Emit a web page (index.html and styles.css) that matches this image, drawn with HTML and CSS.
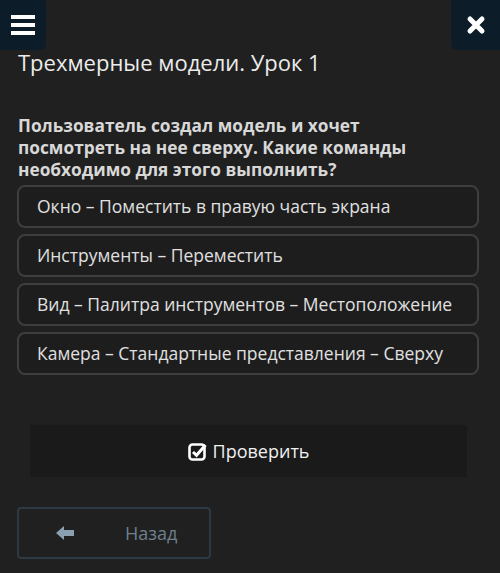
FILE: index.html
```html
<!DOCTYPE html>
<html>
<head>
    <title>Трехмерные модели</title>
    <link rel="stylesheet" href="styles.css">
</head>
<body>
    <div class="topbar">
        <div class="icon-btn">
            <svg width="24" height="22" viewBox="0 0 24 22"><rect x="0" y="1" width="24" height="4" fill="#fff"/><rect x="0" y="9" width="24" height="4" fill="#fff"/><rect x="0" y="17" width="24" height="4" fill="#fff"/></svg>
        </div>
        <div class="icon-btn close">
            <svg width="20" height="20" viewBox="0 0 20 20"><path d="M4 4 L16 16 M16 4 L4 16" stroke="#fff" stroke-width="5" stroke-linecap="round"/></svg>
        </div>
    </div>
    <div class="content">
        <h1 class="title">Трехмерные модели. Урок 1</h1>
        <p class="question">Пользователь создал модель и хочет посмотреть на нее сверху. Какие команды необходимо для этого выполнить?</p>
        <div class="options">
            <div class="option">Окно – Поместить в правую часть экрана</div>
            <div class="option">Инструменты – Переместить</div>
            <div class="option">Вид – Палитра инструментов – Местоположение</div>
            <div class="option">Камера – Стандартные представления – Сверху</div>
        </div>
        <div class="check">
            <svg width="19" height="19" viewBox="0 0 19 19"><rect x="1.5" y="2.5" width="15" height="15" rx="3" fill="none" stroke="#fff" stroke-width="2.6"/><path d="M5 10 L8.5 13.3 L17.5 3" fill="none" stroke="#fff" stroke-width="3"/></svg>
            <span>Проверить</span>
        </div>
        <div class="back">
            <svg width="20" height="16" viewBox="0 0 20 16"><path d="M1 8 L9 1 L9 5 L19 5 L19 11 L9 11 L9 15 Z" fill="#8aa0b0"/></svg>
            <span>Назад</span>
        </div>
    </div>
</body>
</html>
```

FILE: styles.css
```css
body {
    margin: 0;
    background-color: #202020;
    font-family: "Open Sans", sans-serif;
    color: #e6e6e6;
    width: 500px;
    height: 573px;
    overflow: hidden;
}
.topbar {
    display: flex;
    justify-content: space-between;
    height: 50px;
}
.icon-btn {
    width: 46px;
    height: 50px;
    background-color: #0c1c28;
    border-radius: 0 0 6px 0;
    display: flex;
    align-items: center;
    justify-content: center;
}
.icon-btn.close {
    width: 49px;
    border-radius: 0 0 0 6px;
}
.content {
    padding: 0 21px 0 17px;
}
.title {
    font-size: 22px;
    font-weight: normal;
    color: #ececec;
    margin: -2px 0 0 1px;
    line-height: 28px;
}
.question {
    font-size: 17.3px;
    font-weight: bold;
    color: #d8d8d8;
    line-height: 22px;
    margin: 39px 0 4px 1px;
    max-width: 420px;
}
.options {
    display: flex;
    flex-direction: column;
    gap: 6px;
}
.option {
    height: 39px;
    border: 2px solid #3e3e3e;
    border-radius: 8px;
    background-color: #1d1d1d;
    padding-left: 18px;
    font-size: 17.5px;
    line-height: 39px;
    color: #e0e0e0;
}
.check {
    margin: 50px 12px 0 13px;
    height: 52px;
    background-color: #1a1a1a;
    display: flex;
    align-items: center;
    justify-content: center;
    gap: 6px;
    font-size: 18px;
    color: #f0f0f0;
}
.back {
    margin-top: 30px;
    width: 190px;
    height: 48px;
    border: 2px solid #2d3a44;
    border-radius: 4px;
    display: flex;
    align-items: center;
    font-size: 18px;
    color: #6f7f8c;
}
.back svg {
    margin-left: 36px;
}
.back span {
    margin-left: 50px;
}
```
